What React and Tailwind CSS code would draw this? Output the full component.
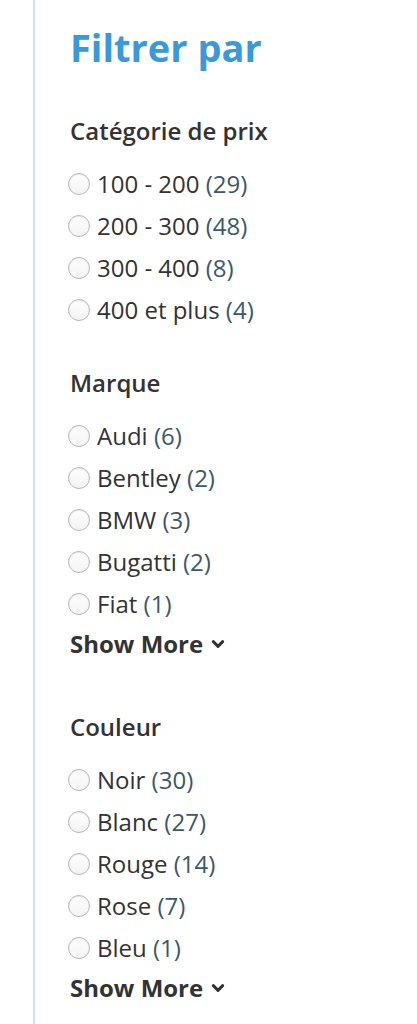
import { useState } from "react";

const sections = [
  {
    title: "Catégorie de prix",
    name: "price",
    items: [
      ["100 - 200", 29],
      ["200 - 300", 48],
      ["300 - 400", 8],
      ["400 et plus", 4],
    ],
  },
  {
    title: "Marque",
    name: "brand",
    more: true,
    items: [
      ["Audi", 6],
      ["Bentley", 2],
      ["BMW", 3],
      ["Bugatti", 2],
      ["Fiat", 1],
    ],
  },
  {
    title: "Couleur",
    name: "color",
    more: true,
    items: [
      ["Noir", 30],
      ["Blanc", 27],
      ["Rouge", 14],
      ["Rose", 7],
      ["Bleu", 1],
    ],
  },
];

const Radio = ({ checked }) => (
  <span className="w-[22px] h-[22px] rounded-full border border-[#b8b8b8] bg-gradient-to-b from-white to-[#f3f3f3] shadow-[inset_0_1px_1px_rgba(0,0,0,0.08)] flex items-center justify-center shrink-0">
    {checked && <span className="w-[10px] h-[10px] rounded-full bg-[#3a99d8]" />}
  </span>
);

const Chevron = () => (
  <svg width="16" height="16" viewBox="0 0 24 24" fill="none" stroke="currentColor" strokeWidth="4.5" strokeLinecap="round" strokeLinejoin="round">
    <path d="M5 8.5l7 7 7-7" />
  </svg>
);

const Section = ({ section, selected, onSelect }) => (
  <div className={section.more ? "mb-[41px]" : "mb-[31px]"}>
    <h3 className="text-[24px] font-semibold text-[#333] h-[42px] flex items-center">{section.title}</h3>
    <ul className="mt-[11px]">
      {section.items.map(([label, count]) => (
        <li key={label}>
          <label
            className="h-[42px] flex items-center gap-[7px] -ml-[2px] cursor-pointer"
            onClick={() => onSelect(section.name, label)}
          >
            <Radio checked={selected[section.name] === label} />
            <span className="text-[24px] text-[#333]">
              {label} <span className="text-[#3b5a68]">({count})</span>
            </span>
          </label>
        </li>
      ))}
    </ul>
    {section.more && (
      <button type="button" className="h-[42px] -mt-[2px] flex items-center gap-[7px] text-[24px] font-bold text-[#333]">
        Show More
        <Chevron />
      </button>
    )}
  </div>
);

export default function App() {
  const [selected, setSelected] = useState({});

  return (
    <div className="min-h-[1024px] bg-white" style={{ fontFamily: '"Open Sans", sans-serif' }}>
      <aside className="ml-[33px] border-l-2 border-[#cce4f4] min-h-[1024px] pl-[35px] pt-[17px]">
        <h2 className="text-[38px] font-bold text-[#3a99d8] leading-[60px] mb-[33px]">Filtrer par</h2>
        {sections.map((s) => (
          <Section
            key={s.name}
            section={s}
            selected={selected}
            onSelect={(name, label) => setSelected((prev) => ({ ...prev, [name]: label }))}
          />
        ))}
      </aside>
    </div>
  );
}
